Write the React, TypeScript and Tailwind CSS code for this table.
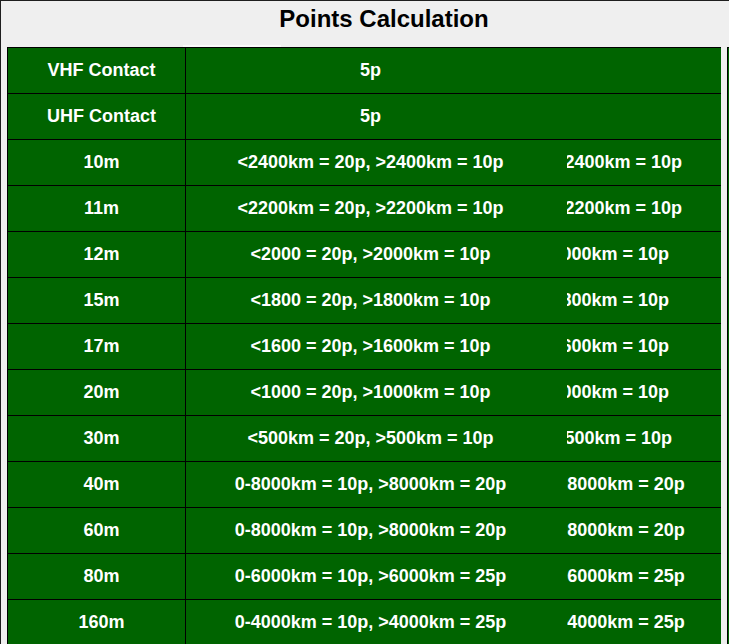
const rows: [string, string][] = [
  ["VHF Contact", "5p"],
  ["UHF Contact", "5p"],
  ["10m", "<2400km = 20p, >2400km = 10p"],
  ["11m", "<2200km = 20p, >2200km = 10p"],
  ["12m", "<2000 = 20p, >2000km = 10p"],
  ["15m", "<1800 = 20p, >1800km = 10p"],
  ["17m", "<1600 = 20p, >1600km = 10p"],
  ["20m", "<1000 = 20p, >1000km = 10p"],
  ["30m", "<500km = 20p, >500km = 10p"],
  ["40m", "0-8000km = 10p, >8000km = 20p"],
  ["60m", "0-8000km = 10p, >8000km = 20p"],
  ["80m", "0-6000km = 10p, >6000km = 25p"],
  ["160m", "0-4000km = 10p, >4000km = 25p"],
];

export default function App() {
  return (
    <div className="w-[729px] h-[644px] overflow-hidden bg-[#efefef] border-t border-l border-[#1e1e1e] font-['Liberation_Sans',Arial,sans-serif]">
      {/* Title */}
      <div className="w-[766px] h-[44px] pt-[4px] text-center text-[24px] leading-[28px] font-bold text-black">
        Points Calculation
      </div>
      <div className="h-[2px]">
        <div className="ml-[182px] w-[98px] h-[2px] bg-[#fafafa]" />
      </div>

      {/* Tables */}
      <div className="flex gap-[6px] pl-[6px]">
        <div className="w-[714px] shrink-0 bg-[#006400] border-l border-t border-black text-white font-bold text-[18px]">
          {rows.map(([band, points]) => (
            <div key={band} className="flex h-[46px] border-b border-black">
              <div className="w-[178px] shrink-0 pl-[10px] flex items-center justify-center border-r border-black">
                {band}
              </div>
              <div className="w-[381px] shrink-0 pr-[12px] flex items-center justify-center whitespace-nowrap">
                {points}
              </div>
              <div className="flex-1 overflow-hidden flex items-center">
                <div className="w-[344px] shrink-0 -ml-[190px] text-center whitespace-nowrap">
                  {points}
                </div>
              </div>
            </div>
          ))}
        </div>
        <div className="w-[20px] shrink-0 h-[620px] bg-[#006400] border-l border-t border-black" />
      </div>
    </div>
  );
}
